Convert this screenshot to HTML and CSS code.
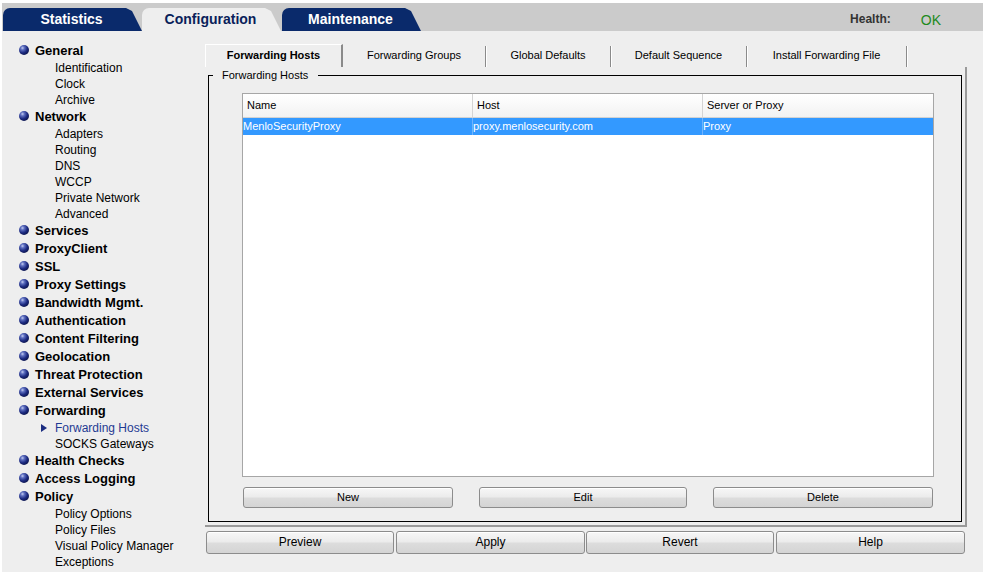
FILE: index.html
```html
<!DOCTYPE html>
<html>
<head>
<meta charset="utf-8">
<link rel="stylesheet" href="styles.css">
</head>
<body>
<div class="app">
  <div class="topbar">
    <div class="ttab dark">Statistics</div>
    <div class="ttab light">Configuration</div>
    <div class="ttab dark third">Maintenance</div>
    <div class="health"><span class="hl">Health:</span><span class="ok">OK</span></div>
  </div>
  <div class="body">
    <nav class="side">
      <div class="h">General</div>
      <div class="s">Identification</div>
      <div class="s">Clock</div>
      <div class="s">Archive</div>
      <div class="h">Network</div>
      <div class="s">Adapters</div>
      <div class="s">Routing</div>
      <div class="s">DNS</div>
      <div class="s">WCCP</div>
      <div class="s">Private Network</div>
      <div class="s">Advanced</div>
      <div class="h">Services</div>
      <div class="h">ProxyClient</div>
      <div class="h">SSL</div>
      <div class="h">Proxy Settings</div>
      <div class="h">Bandwidth Mgmt.</div>
      <div class="h">Authentication</div>
      <div class="h">Content Filtering</div>
      <div class="h">Geolocation</div>
      <div class="h">Threat Protection</div>
      <div class="h">External Services</div>
      <div class="h">Forwarding</div>
      <div class="s active">Forwarding Hosts</div>
      <div class="s">SOCKS Gateways</div>
      <div class="h">Health Checks</div>
      <div class="h">Access Logging</div>
      <div class="h">Policy</div>
      <div class="s">Policy Options</div>
      <div class="s">Policy Files</div>
      <div class="s">Visual Policy Manager</div>
      <div class="s">Exceptions</div>
    </nav>
    <main class="main">
      <div class="subtabs">
        <div class="stab sel w1">Forwarding Hosts</div>
        <div class="stab w2">Forwarding Groups</div>
        <div class="stab w3">Global Defaults</div>
        <div class="stab w4">Default Sequence</div>
        <div class="stab w5">Install Forwarding File</div>
      </div>
      <div class="panel">
        <fieldset class="group">
          <legend>Forwarding Hosts</legend>
          <div class="inner">
            <div class="table">
              <div class="thead">
                <div class="th c1">Name</div>
                <div class="th c2">Host</div>
                <div class="th c3">Server or Proxy</div>
              </div>
              <div class="tr selrow">
                <div class="td c1">MenloSecurityProxy</div>
                <div class="td c2">proxy.menlosecurity.com</div>
                <div class="td c3">Proxy</div>
              </div>
            </div>
            <div class="btnrow">
              <div class="btn b-new">New</div>
              <div class="btn b-edit">Edit</div>
              <div class="btn b-del">Delete</div>
            </div>
          </div>
        </fieldset>
      </div>
      <div class="actions">
        <div class="btn big a1">Preview</div>
        <div class="btn big a2">Apply</div>
        <div class="btn big a3">Revert</div>
        <div class="btn big a4">Help</div>
      </div>
    </main>
  </div>
</div>
</body>
</html>
```
FILE: styles.css
```css
html, body { margin: 0; padding: 0; background: #ffffff; }
body { font-family: "Liberation Sans", Arial, sans-serif; color: #000; }

.app {
  margin: 3px 2px 0 2px;
  width: 981px;
  height: 569px;
  background: #eeeeee;
  overflow: hidden;
}

/* top bar */
.topbar {
  height: 28px;
  background: #cbcbcb;
  display: flex;
  align-items: flex-end;
  padding-left: 1px;
}
.ttab {
  width: 139px;
  height: 23px;
  box-sizing: border-box;
  border-top-left-radius: 7px;
  clip-path: polygon(0 0, calc(100% - 16px) 0, calc(100% - 10px) 3px, 100% 100%, 0 100%);
  font-weight: bold;
  font-size: 14px;
  line-height: 23px;
  text-align: center;
  padding-right: 2px;
}
.ttab.dark { background: #0a2a6b; color: #ffffff; }
.ttab.light { background: #eeeeee; color: #0a1e5a; }
.ttab.third { margin-left: 1px; }
.health {
  margin-left: auto;
  padding-right: 42px;
  height: 28px;
  display: flex;
  align-items: center;
}
.hl { font-weight: bold; font-size: 12px; color: #333333; margin-top: 4px; }
.ok { font-size: 14px; color: #1d8a1d; margin-left: 30px; margin-top: 6px; }

/* layout */
.body { display: flex; }

/* sidebar */
.side {
  width: 203px;
  padding-top: 10px;
}
.h {
  height: 18px;
  display: flex;
  align-items: center;
  padding-left: 17px;
  font-weight: bold;
  font-size: 13px;
  color: #000;
}
.h::before {
  content: "";
  width: 10px;
  height: 10px;
  border-radius: 50%;
  margin-right: 6px;
  background: radial-gradient(circle at 35% 30%, #c4ccf0 0, #5e6fc0 20%, #1c2a80 50%, #0a1248 80%, #060a2a 100%);
}
.s {
  box-sizing: border-box;
  height: 16px;
  padding-top: 2px;
  display: flex;
  align-items: center;
  padding-left: 53px;
  font-size: 12px;
  color: #000;
}
.s.active {
  padding-left: 39px;
  color: #1f3a93;
}
.s.active::before {
  content: "";
  width: 0;
  height: 0;
  border-top: 4px solid transparent;
  border-bottom: 4px solid transparent;
  border-left: 6px solid #1a2c80;
  margin-right: 8px;
}

/* main */
.main {
  width: 762px;
  padding-top: 13px;
}
.subtabs {
  display: flex;
  height: 23px;
  font-size: 11px;
}
.stab {
  box-sizing: border-box;
  height: 21px;
  margin-top: 2px;
  text-align: center;
  line-height: 18px;
  border-right: 1px solid #8a8a8a;
  box-shadow: 1px 0 0 #ffffff;
}
.stab.sel {
  height: 23px;
  margin-top: 0;
  font-weight: bold;
  border-top: 1px solid #ffffff;
  border-left: 1px solid #ffffff;
  border-right: 2px solid #8a8a8a;
  line-height: 20px;
  box-shadow: none;
}
.w1 { width: 138px; }
.w2 { width: 143px; }
.w3 { width: 125px; }
.w4 { width: 136px; }
.w5 { width: 160px; }

.panel {
  box-sizing: border-box;
  width: 762px;
  height: 460px;
  border-right: 2px solid #9a9a9a;
  border-bottom: 2px solid #9a9a9a;
  padding: 2px 3px 0 3px;
}
.group {
  margin: 0;
  padding: 0;
  border: 1px solid #000;
  min-width: 0;
}
.group legend {
  margin-left: 4px;
  padding: 0 10px 0 9px;
  font-size: 11px;
  line-height: 13px;
}
.inner {
  padding: 11px 27px 13px 33px;
}

/* table */
.table {
  box-sizing: border-box;
  height: 384px;
  background: #ffffff;
  border: 1px solid #a6a6a6;
  font-size: 11px;
}
.thead, .tr { display: flex; }
.thead {
  height: 23px;
  background: linear-gradient(#ffffff, #f2f2f2);
  border-bottom: 1px solid #d2d2d2;
}
.th {
  box-sizing: border-box;
  line-height: 23px;
  padding-left: 4px;
  border-right: 1px solid #d4d4d4;
}
.c1 { width: 230px; }
.c2 { width: 230px; }
.c3 { flex: 1; }
.th.c3 { border-right: none; }
.tr.selrow {
  height: 17px;
  background: #3399ff;
  color: #ffffff;
}
.td {
  box-sizing: border-box;
  line-height: 17px;
  padding-left: 0;
  border-right: 1px solid #6fb3ff;
}
.td.c3 { border-right: none; }

/* buttons */
.btnrow {
  display: flex;
  gap: 26px;
  margin-top: 10px;
  margin-left: 1px;
}
.btn {
  box-sizing: border-box;
  height: 21px;
  border: 1px solid #8c8c8c;
  border-radius: 3px;
  background: linear-gradient(#f7f7f7 0%, #ececec 45%, #dcdcdc 55%, #d4d4d4 100%);
  box-shadow: inset 0 1px 0 #ffffff;
  font-size: 11px;
  line-height: 19px;
  text-align: center;
}
.b-new { width: 210px; }
.b-edit { width: 208px; }
.b-del { width: 220px; }

.actions {
  display: flex;
  margin-top: 4px;
  margin-left: 1px;
}
.btn.big {
  height: 23px;
  line-height: 21px;
  font-size: 12px;
}
.a1 { width: 188px; }
.a2 { width: 189px; margin-left: 2px; }
.a3 { width: 188px; margin-left: 1px; }
.a4 { width: 189px; margin-left: 2px; }
```
